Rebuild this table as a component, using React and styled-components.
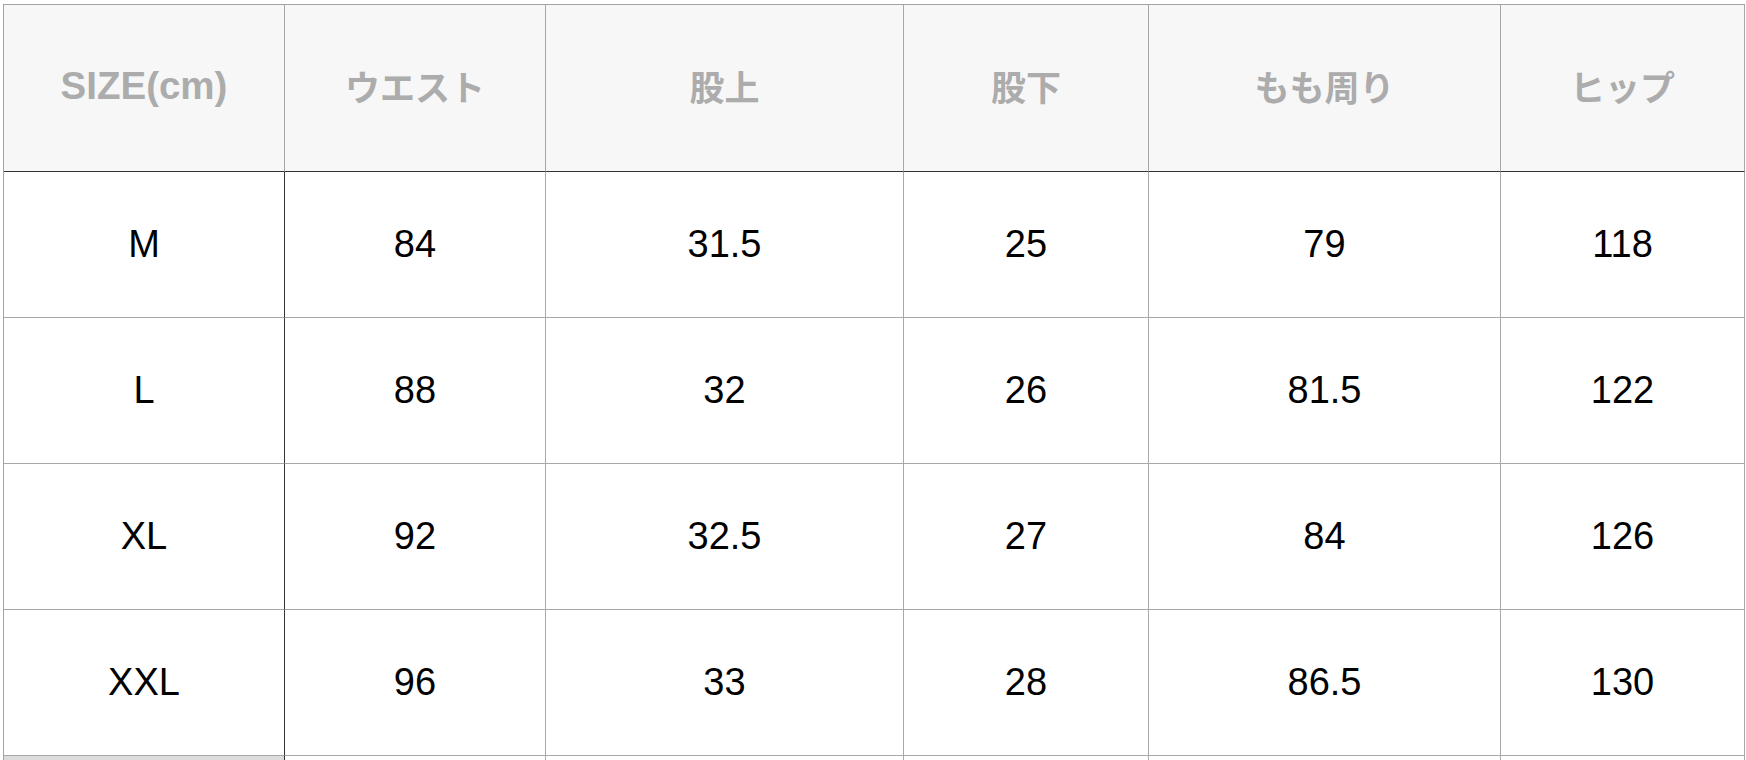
import React from "react";
import styled, { createGlobalStyle } from "styled-components";

const Global = createGlobalStyle`
  html, body { margin: 0; padding: 0; background: #fff; }
  body { font-family: "Liberation Sans", "Noto Sans CJK JP", sans-serif; }
`;

const Page = styled.div`
  padding: 4px 0 0 3px;
`;

const Grid = styled.div`
  display: grid;
  grid-template-columns: 281px 261px 358px 245px 352px 244px;
  grid-auto-rows: 146px;
  grid-template-rows: 167px;
  border-left: 1px solid #a3a3a3;
  border-top: 1px solid #a3a3a3;
  width: max-content;
`;

const Cell = styled.div`
  box-sizing: border-box;
  display: flex;
  align-items: center;
  justify-content: center;
  border-right: 1px solid ${(p) => (p.$darkRight ? "#333" : "#a8a8a8")};
  border-bottom: 1px solid ${(p) => (p.$darkBottom ? "#333" : "#a8a8a8")};
  background: ${(p) => p.$bg || "#fff"};
`;

const HeadCell = styled(Cell)`
  background: #f7f7f7;
  color: #acacac;
  font-weight: 700;
  font-size: ${(p) => (p.$jp ? "35px" : "38.5px")};
  padding-bottom: ${(p) => (p.$jp ? "6px" : "4px")};
  font-family: "Liberation Sans", "Noto Sans CJK JP", sans-serif;
`;

const BodyCell = styled(Cell)`
  color: #000;
  font-size: 38px;
  font-weight: 400;
  padding-bottom: 1px;
`;

const headers = ["SIZE(cm)", "ウエスト", "股上", "股下", "もも周り", "ヒップ"];
const rows = [
  ["M", "84", "31.5", "25", "79", "118"],
  ["L", "88", "32", "26", "81.5", "122"],
  ["XL", "92", "32.5", "27", "84", "126"],
  ["XXL", "96", "33", "28", "86.5", "130"],
];

export default function App() {
  return (
    <>
      <Global />
      <Page>
        <Grid role="table">
          {headers.map((h, i) => (
            <HeadCell key={h} $jp={i > 0} $darkBottom role="columnheader">
              {h}
            </HeadCell>
          ))}
          {rows.map((r) =>
            r.map((v, i) => (
              <BodyCell key={r[0] + i} $darkRight={i === 0} role="cell">
                {v}
              </BodyCell>
            ))
          )}
          {headers.map((h, i) => (
            <BodyCell key={"x" + i} $darkRight={i === 0} $bg={i === 0 ? "#dcdcdc" : "#fff"} />
          ))}
        </Grid>
      </Page>
    </>
  );
}
